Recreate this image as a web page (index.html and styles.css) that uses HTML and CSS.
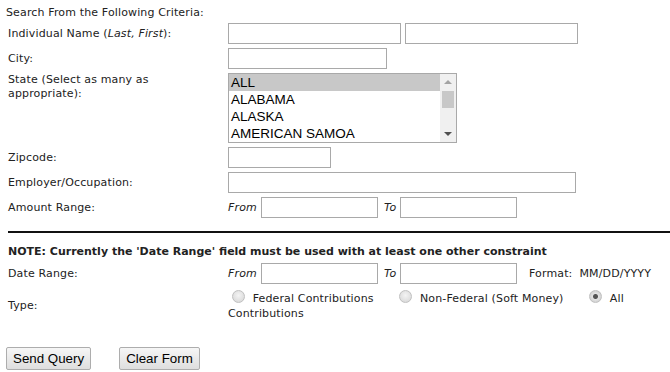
FILE: index.html
```
<!DOCTYPE html>
<html lang="en">
<head>
	<meta charset="UTF-8">
	<title>Search Contributions</title>
	<link rel="stylesheet" href="styles.css">
</head>
<body>
<form class="search">
	<p class="search-title">Search From the Following Criteria:</p>

	<div class="fields">
		<label class="field-label">Individual Name (<i>Last, First</i>):</label>
		<div class="field-control">
			<input class="text text-name" type="text">
			<input class="text text-name" type="text">
		</div>

		<label class="field-label">City:</label>
		<div class="field-control">
			<input class="text text-city" type="text">
		</div>

		<label class="field-label field-label-top">State (Select as many as appropriate):</label>
		<div class="field-control">
			<div class="listbox">
				<ul class="listbox-options">
					<li class="selected">ALL</li>
					<li>ALABAMA</li>
					<li>ALASKA</li>
					<li>AMERICAN SAMOA</li>
				</ul>
				<div class="listbox-scroll">
					<span class="arrow arrow-up"></span>
					<span class="thumb"></span>
					<span class="arrow arrow-down"></span>
				</div>
			</div>
		</div>

		<label class="field-label">Zipcode:</label>
		<div class="field-control">
			<input class="text text-zip" type="text">
		</div>

		<label class="field-label">Employer/Occupation:</label>
		<div class="field-control">
			<input class="text text-employer" type="text">
		</div>

		<label class="field-label">Amount Range:</label>
		<div class="field-control">
			<span class="range-from">From</span>
			<input class="text text-range" type="text">
			<span class="range-to">To</span>
			<input class="text text-range" type="text">
		</div>
	</div>

	<hr class="divider">

	<p class="note">NOTE: Currently the 'Date Range' field must be used with at least one other constraint</p>

	<div class="fields fields-date">
		<label class="field-label">Date Range:</label>
		<div class="field-control">
			<span class="range-from">From</span>
			<input class="text text-range" type="text">
			<span class="range-to">To</span>
			<input class="text text-range" type="text">
			<span class="format">Format:</span><span>MM/DD/YYYY</span>
		</div>

		<label class="field-label">Type:</label>
		<div class="type-options">
			<input class="radio" type="radio" name="type"> Federal Contributions
			<input class="radio radio-gap" type="radio" name="type"> Non-Federal (Soft Money)
			<input class="radio radio-gap" type="radio" name="type" checked> All Contributions
		</div>
	</div>

	<div class="actions">
		<button class="btn" type="submit">Send Query</button>
		<button class="btn" type="reset">Clear Form</button>
	</div>
</form>
</body>
</html>
```

FILE: styles.css
```
* {
	box-sizing: border-box;
}

body {
	margin: 0;
	padding: 6px 0 0 0;
	font-family: "DejaVu Sans", Verdana, sans-serif;
	font-size: 11px;
	letter-spacing: 0.14px;
	color: #222;
	background-color: #fff;
}

.search-title {
	margin: 0 0 3px 6px;
	line-height: 14px;
}

.fields {
	display: grid;
	grid-template-columns: 220px 1fr;
	row-gap: 4px;
	padding-left: 8px;
}

.field-label {
	align-self: center;
	line-height: 14px;
	padding-right: 30px;
}

.field-label-top {
	align-self: start;
}

.field-control {
	display: flex;
	align-items: center;
}

.text {
	height: 21px;
	margin: 0;
	padding: 1px 2px;
	border: 1px solid #a9a9a9;
	background-color: #fff;
	font-family: "Liberation Sans", Arial, sans-serif;
	font-size: 13px;
}

.text-name {
	width: 173px;
	margin-right: 4px;
}

.text-city {
	width: 159px;
}

.text-zip {
	width: 103px;
}

.text-employer {
	width: 348px;
}

.text-range {
	width: 117px;
}

.range-from,
.range-to {
	font-style: italic;
}

.range-from {
	width: 33px;
}

.range-to {
	width: 16px;
	margin-left: 6px;
}

.format {
	margin-left: 12px;
	margin-right: 7px;
}

/* state list */
.listbox {
	display: flex;
	width: 229px;
	height: 70px;
	border: 1px solid #a9a9a9;
	background-color: #fff;
}

.listbox-options {
	flex: 1;
	margin: 0;
	padding: 0;
	list-style: none;
	font-family: "Liberation Sans", Arial, sans-serif;
	font-size: 13.5px;
	letter-spacing: 0;
	color: #000;
}

.listbox-options li {
	height: 17px;
	line-height: 17px;
	padding-left: 2px;
}

.listbox-options .selected {
	background-color: #c8c8c8;
}

.listbox-scroll {
	position: relative;
	width: 16px;
	background-color: #f0f0f0;
}

.thumb {
	position: absolute;
	top: 17px;
	left: 2px;
	width: 12px;
	height: 17px;
	background-color: #c8c8c8;
}

.arrow {
	position: absolute;
	left: 4px;
	width: 0;
	height: 0;
	border-left: 4px solid transparent;
	border-right: 4px solid transparent;
}

.arrow-up {
	top: 6px;
	border-bottom: 4px solid #a3a3a3;
}

.arrow-down {
	bottom: 6px;
	border-top: 4px solid #505050;
}

.divider {
	height: 2px;
	margin: 13px 0 0 8px;
	border: none;
	background-color: #111;
}

.note {
	margin: 12px 0 4px 8px;
	font-weight: bold;
	letter-spacing: 0;
	line-height: 14px;
}

.fields-date {
	row-gap: 6px;
}

.type-options {
	line-height: 15px;
	padding-right: 30px;
}

.radio {
	appearance: none;
	width: 13px;
	height: 13px;
	margin: 0 4px 0 4px;
	vertical-align: -1px;
	border: 1px solid #c0c0c0;
	border-radius: 50%;
	background: radial-gradient(circle at 50% 40%, #f4f4f4, #d4d4d4);
}

.radio-gap {
	margin-left: 22px;
}

.radio:checked {
	background: radial-gradient(circle, #555 0, #555 2px, #e4e4e4 3px, #d0d0d0 6px);
}

.actions {
	display: flex;
	gap: 28px;
	margin: 26px 0 0 6px;
}

.btn {
	height: 23px;
	padding: 0 6px;
	border: 1px solid #adadad;
	border-radius: 2px;
	background: linear-gradient(#f6f6f6, #dedede);
	font-family: "Liberation Sans", Arial, sans-serif;
	font-size: 13.33px;
	letter-spacing: 0;
	color: #000;
}
```
